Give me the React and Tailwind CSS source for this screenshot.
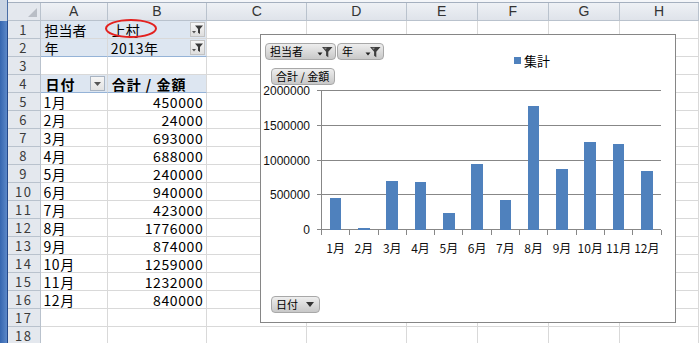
/**
 * Pivot table sheet with a pivot chart floating over the grid.
 */

const JP = "font-['Noto_Sans_CJK_JP',sans-serif]";

const COLS = [
  { id: 'A', w: 'w-[68px]' },
  { id: 'B', w: 'w-[101px]' },
  { id: 'C', w: 'w-[101px]' },
  { id: 'D', w: 'w-[101px]' },
  { id: 'E', w: 'w-[72px]' },
  { id: 'F', w: 'w-[72px]' },
  { id: 'G', w: 'w-[72px]' },
  { id: 'H', w: 'w-[80px]' },
];

const MONTHS = [
  ['1月', 450000],
  ['2月', 24000],
  ['3月', 693000],
  ['4月', 688000],
  ['5月', 240000],
  ['6月', 940000],
  ['7月', 423000],
  ['8月', 1776000],
  ['9月', 874000],
  ['10月', 1259000],
  ['11月', 1232000],
  ['12月', 840000],
];

function SheetFilterButton() {
  return (
    <div className="mr-[1px] flex h-[15px] w-[15px] items-center justify-center border border-[#c3c3c3] bg-linear-to-b from-[#f7f7f7] to-[#dedede]">
      <svg width="13" height="11" viewBox="0 0 13 11">
        <path d="M1 7h4l-2 2.5z" fill="#555" />
        <path d="M4 1.5h8l-3 3.5v5l-2-1.2V5z" fill="#3a3a3a" />
      </svg>
    </div>
  );
}

function SheetDropButton() {
  return (
    <div className="mr-[2px] flex h-[15px] w-[15px] items-center justify-center border border-[#a9b4c2] bg-linear-to-b from-[#f6f6f6] to-[#e2e2e2]">
      <svg width="7" height="4" viewBox="0 0 7 4">
        <path d="M0 0h7L3.5 4z" fill="#555" />
      </svg>
    </div>
  );
}

function cellContent(row, col) {
  if (row === 1 && col === 'A') return <span className="pl-[4px]">担当者</span>;
  if (row === 1 && col === 'B')
    return (
      <>
        <span className="pl-[4px]">上村</span>
        <SheetFilterButton />
      </>
    );
  if (row === 2 && col === 'A') return <span className="pl-[4px]">年</span>;
  if (row === 2 && col === 'B')
    return (
      <>
        <span className="pl-[3px] tracking-[0.6px] tabular-nums">2013年</span>
        <SheetFilterButton />
      </>
    );
  if (row === 4 && col === 'A')
    return (
      <>
        <span className="pl-[5px] font-bold tracking-[1px]">日付</span>
        <SheetDropButton />
      </>
    );
  if (row === 4 && col === 'B')
    return <span className="pl-[4px] font-bold tracking-[1px] whitespace-pre">合計 / 金額</span>;
  if (row >= 5 && row <= 16) {
    const [label, value] = MONTHS[row - 5];
    if (col === 'A') return <span className="pl-[3px] tracking-[0.6px] tabular-nums">{label}</span>;
    if (col === 'B')
      return <span className="ml-auto pr-[3px] tracking-[0.6px] tabular-nums">{value}</span>;
  }
  return null;
}

function cellBg(row, col) {
  const pivotCol = col === 'A' || col === 'B';
  if (pivotCol && (row === 1 || row === 2 || row === 4)) {
    if (row === 2 || row === 4) return 'bg-[#dde6f1] border-b-[#95b3d7]';
    return 'bg-[#dde6f1]';
  }
  return 'bg-white';
}

function SheetRow({ row }) {
  return (
    <div className="flex h-[18px]">
      <div className="h-full w-[8px] bg-linear-to-r from-[#3566b0] to-[#5b88c8] border-r border-[#23488a]" />
      <div className="flex h-full w-[33px] items-center justify-center border-r border-b border-[#b9c2cd] bg-[#e4e8ee] text-[13px] tracking-[1.5px] text-[#3b3b3b] tabular-nums">
        {row}
      </div>
      {COLS.map((c) => (
        <div
          key={c.id}
          className={`flex h-full items-center justify-between border-r border-b border-[#d9d9d9] text-[14px] leading-none text-black ${c.w} ${cellBg(row, c.id)}`}
        >
          {cellContent(row, c.id)}
        </div>
      ))}
    </div>
  );
}

function HeaderRow() {
  return (
    <div className="flex h-[18px]">
      <div className="h-full w-[8px] bg-[#c9d4e3] border-r border-[#4a6ea6]" />
      <div className="relative h-full w-[33px] border-r border-b border-[#b9c2cd] bg-[#e4e8ee]">
        <svg className="absolute right-[3px] bottom-[3px]" width="9" height="9" viewBox="0 0 9 9">
          <path d="M9 0v9H0z" fill="#b9bec6" />
        </svg>
      </div>
      {COLS.map((c) => (
        <div
          key={c.id}
          className={`flex h-full items-center justify-center border-r border-b border-[#b9c2cd] bg-linear-to-b from-[#eef1f5] to-[#dfe3ea] font-['Liberation_Sans',sans-serif] text-[14px] text-[#333] ${c.w}`}
        >
          {c.id}
        </div>
      ))}
    </div>
  );
}

function ChartFilterIcon() {
  return (
    <svg width="16" height="12" viewBox="0 0 16 12">
      <path d="M0.5 6.5h5l-2.5 3z" fill="#222" />
      <path d="M5 1h10.5l-4.2 4.8v5.4l-2.2-1.4V5.8z" fill="#3d3d3d" />
      <path d="M7 1.8h3l-1.5 2z" fill="#8a8a8a" />
    </svg>
  );
}

function ChartButton({ label, w, icon, drop }) {
  return (
    <div
      className={`flex h-[17px] items-center justify-between rounded-[4px] border border-[#a8a8a8] bg-linear-to-b from-[#eeeeee] to-[#c8c8c8] pr-[2px] pl-[4px] text-[11px] leading-none text-black ${w}`}
    >
      <span className="whitespace-pre">{label}</span>
      {icon && <ChartFilterIcon />}
      {drop && (
        <svg className="mr-[3px]" width="8" height="5" viewBox="0 0 8 5">
          <path d="M0 0h8L4 5z" fill="#333" />
        </svg>
      )}
    </div>
  );
}

function PlotArea() {
  const left = 60.5;
  const right = 400;
  const cw = (right - left) / 12;
  const zero = 144.5;
  const scale = 139 / 2000000;
  const grid = [
    [5.5, '2000000'],
    [40.5, '1500000'],
    [75.5, '1000000'],
    [109.5, '500000'],
    [144.5, '0'],
  ];
  return (
    <svg width="414" height="175" viewBox="0 0 414 175" className="block">
      {grid.map(([y, label]) => (
        <g key={label}>
          <line x1="55.5" x2={right} y1={y} y2={y} stroke="#878787" strokeWidth="1" shapeRendering="crispEdges" />
          <text
            x="49"
            y={y + 4.5}
            textAnchor="end"
            fontFamily="Liberation Sans, sans-serif"
            fontSize="12"
            fill="#111"
          >
            {label}
          </text>
        </g>
      ))}
      <line x1={left} x2={left} y1="5" y2="145" stroke="#878787" strokeWidth="1" shapeRendering="crispEdges" />
      {Array.from({ length: 13 }, (_, k) => (
        <line
          key={k}
          x1={left + cw * k}
          x2={left + cw * k}
          y1="144.5"
          y2="150"
          stroke="#878787"
          strokeWidth="1"
          shapeRendering="crispEdges"
        />
      ))}
      {MONTHS.map(([label, v], i) => {
        const h = v * scale;
        const cx = left + cw * (i + 0.5);
        return (
          <g key={label}>
            <rect x={cx - 5.8} y={zero - h} width="11.6" height={h} fill="#4f81bd" shapeRendering="crispEdges" />
            <text
              x={cx}
              y="168"
              textAnchor="middle"
              fontFamily="Noto Sans CJK JP, sans-serif"
              fontSize="12"
              fill="#111"
            >
              {label}
            </text>
          </g>
        );
      })}
    </svg>
  );
}

function PivotChart() {
  return (
    <div className={`absolute top-[34px] left-[260px] h-[289px] w-[416px] border border-[#868686] bg-white ${JP}`}>
      <div className="mt-[8px] flex gap-[1px] pl-[4px]">
        <ChartButton label="担当者" w="w-[71px]" icon />
        <ChartButton label="年" w="w-[47px]" icon />
      </div>
      <div className="mt-[8px] pl-[10px]">
        <ChartButton label="合計 / 金額" w="w-[64px]" />
      </div>
      <PlotArea />
      <div className="mt-[36px] pl-[10px]">
        <ChartButton label="日付" w="w-[49px]" drop />
      </div>

      <div className="absolute top-[16px] left-[253px] flex items-center gap-[3px] text-[13px] text-black">
        <span className="h-[7px] w-[7px] bg-[#4f81bd]" />
        <span>集計</span>
      </div>
    </div>
  );
}

export default function App() {
  const rows = Array.from({ length: 18 }, (_, i) => i + 1);
  return (
    <div className={`relative h-[343px] w-[699px] overflow-hidden bg-white ${JP}`}>
      <div className="flex h-[3px]">
        <div className="h-full w-[8px] bg-[#c9d4e3] border-r border-[#4a6ea6]" />
        <div className="h-full flex-1 bg-[#f4f6f9] border-b border-[#a5b0bf]" />
      </div>
      <HeaderRow />
      {rows.map((r) => (
        <SheetRow key={r} row={r} />
      ))}

      <div className="absolute top-[19px] left-[105px] h-[19px] w-[52px] rounded-[50%] border-2 border-[#e3211f]" />

      <PivotChart />
    </div>
  );
}
